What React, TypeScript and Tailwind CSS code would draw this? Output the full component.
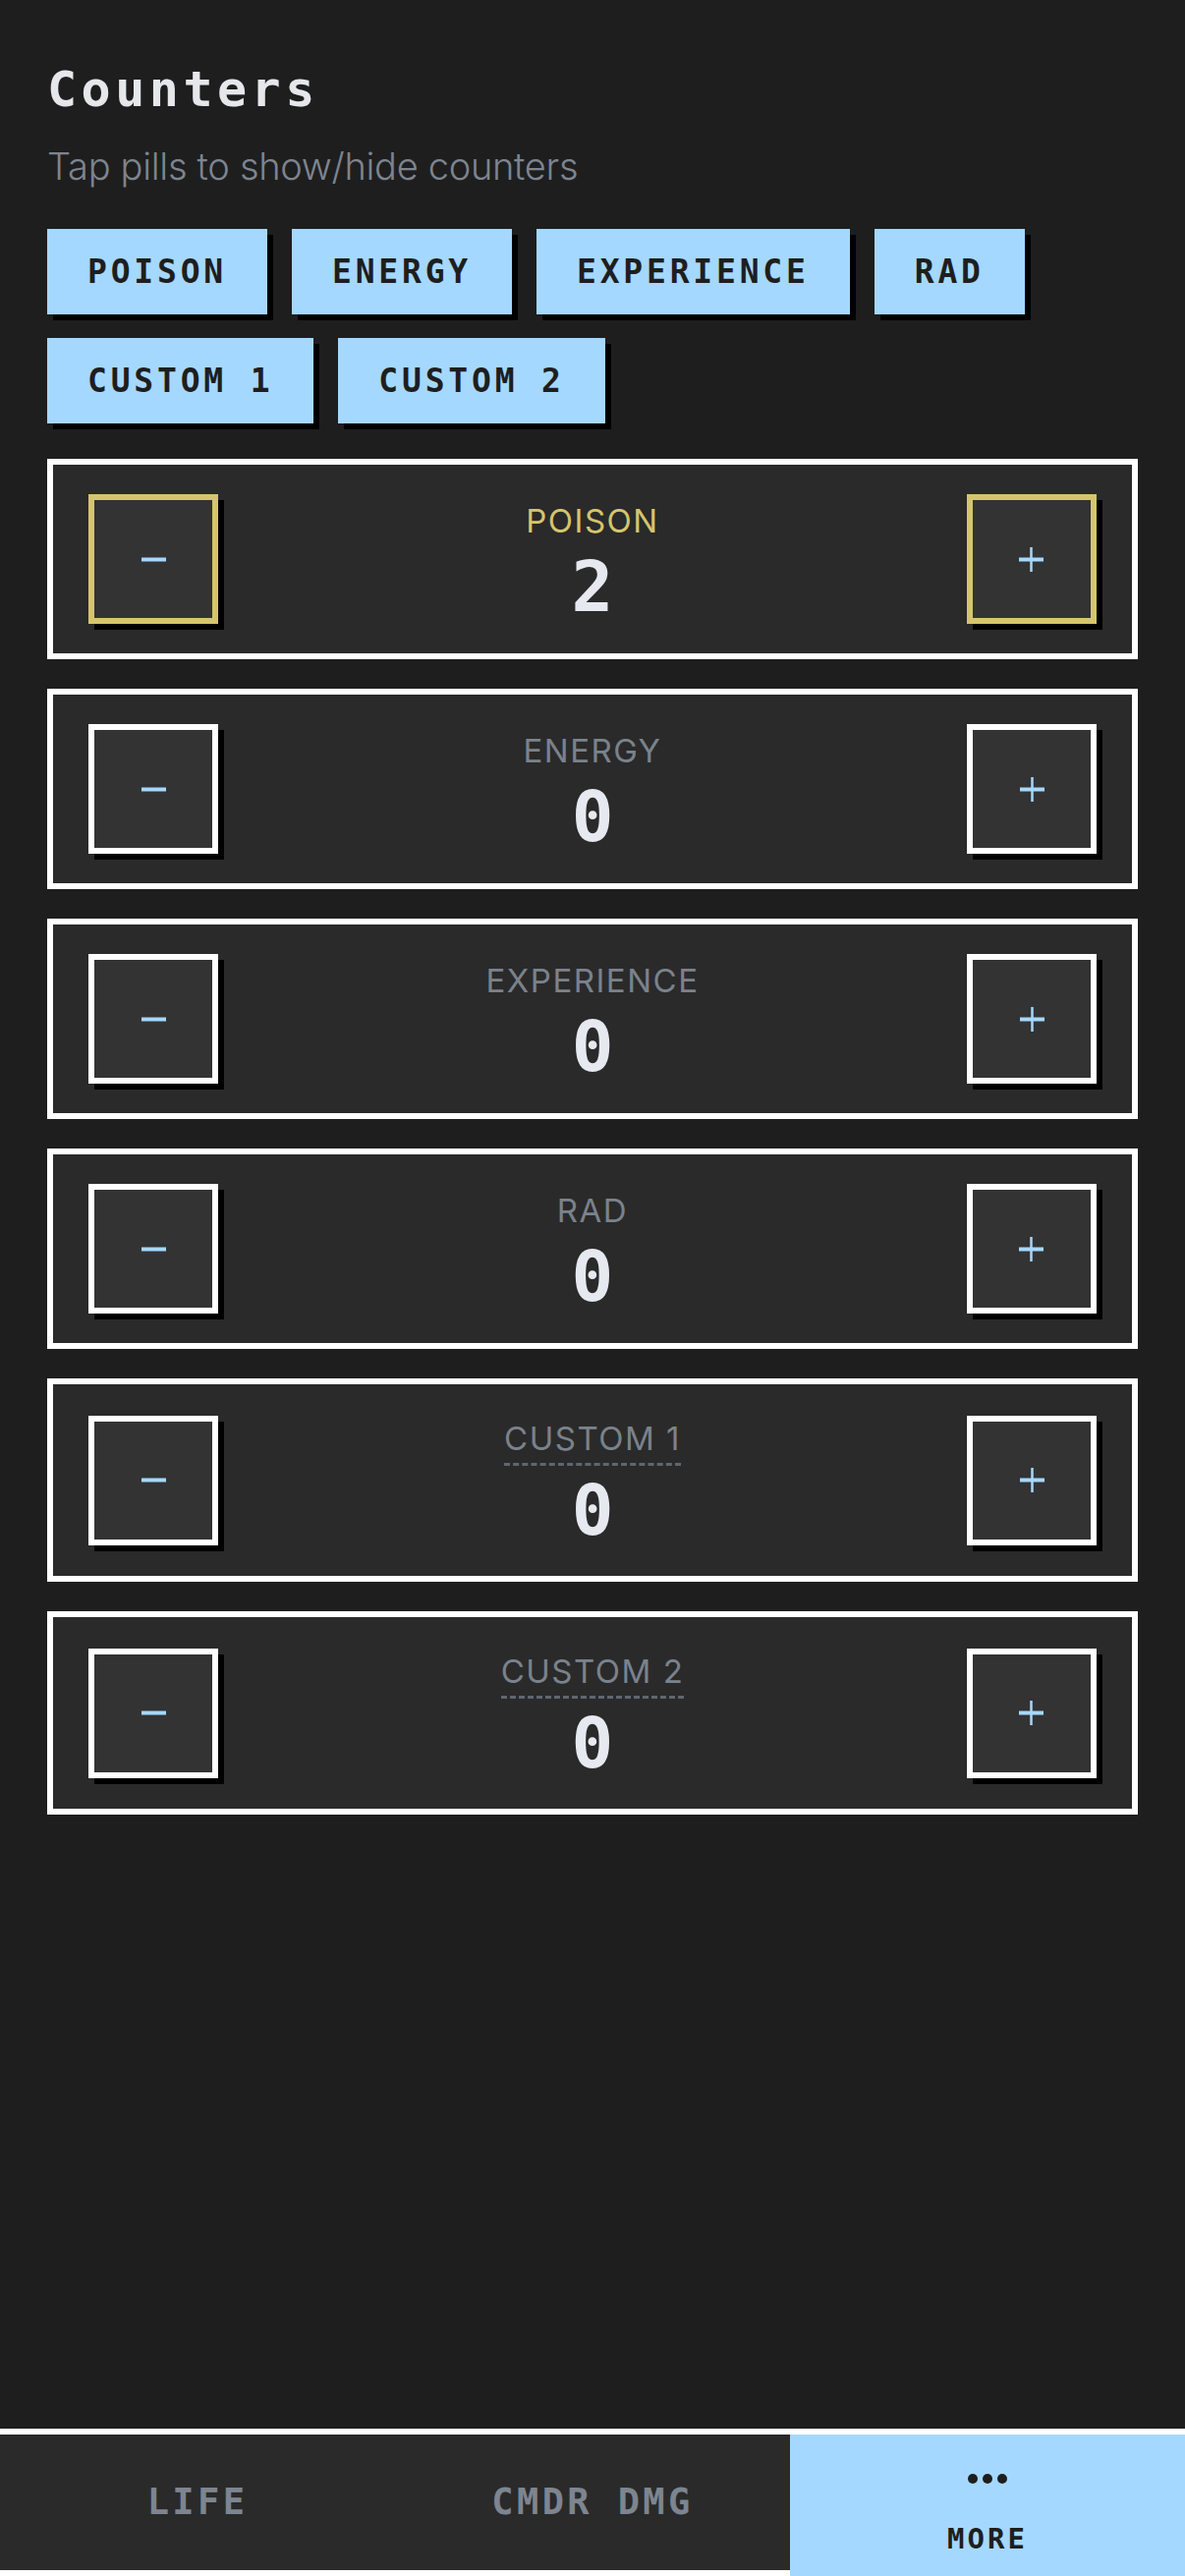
import { useState } from "react";

interface Counter {
  name: string;
  value: number;
  custom?: boolean;
}

const INITIAL: Counter[] = [
  { name: "POISON", value: 2 },
  { name: "ENERGY", value: 0 },
  { name: "EXPERIENCE", value: 0 },
  { name: "RAD", value: 0 },
  { name: "CUSTOM 1", value: 0, custom: true },
  { name: "CUSTOM 2", value: 0, custom: true },
];

const TABS = ["LIFE", "CMDR DMG", "MORE"] as const;

function MinusIcon() {
  return (
    <svg width="25" height="25" viewBox="0 0 25 25">
      <rect x="0" y="10.5" width="25" height="4" fill="#a5d8ff" />
    </svg>
  );
}

function PlusIcon() {
  return (
    <svg width="25" height="25" viewBox="0 0 25 25">
      <rect x="0" y="10.5" width="25" height="4" fill="#a5d8ff" />
      <rect x="11.25" y="0" width="2.5" height="25" fill="#a5d8ff" />
    </svg>
  );
}

function StepButton({ highlight, onClick, children }: { highlight: boolean; onClick: () => void; children: React.ReactNode }) {
  return (
    <button
      onClick={onClick}
      className={`w-[132px] h-[132px] shrink-0 flex items-center justify-center bg-[#333333] border-[6px] shadow-[6px_6px_0_#000] ${
        highlight ? "border-[#d5c56d]" : "border-white"
      }`}
    >
      {children}
    </button>
  );
}

export default function App() {
  const [counters, setCounters] = useState<Counter[]>(INITIAL);
  const [activeTab, setActiveTab] = useState<string>("MORE");

  const bump = (i: number, d: number) =>
    setCounters((prev) => prev.map((c, j) => (j === i ? { ...c, value: c.value + d } : c)));

  return (
    <div className="min-h-screen flex flex-col bg-[#1e1e1e]">
      <div className="px-[48px] pt-[61px]">
        <h1 className="font-['DejaVu_Sans_Mono',monospace] font-bold text-[50px] leading-[60px] tracking-[4.5px] text-[#e5e7eb]">
          Counters
        </h1>
        <p className="mt-[23px] font-['Inter',sans-serif] font-light text-[38px] leading-[50px] tracking-[-0.3px] text-[#7d8590]">
          Tap pills to show/hide counters
        </p>

        <div className="mt-[39px] flex flex-wrap gap-x-[25px] gap-y-[24px] w-[1000px]">
          {counters.map((c) => (
            <button
              key={c.name}
              className="h-[87px] px-[41px] flex items-center bg-[#a5d8ff] shadow-[6px_6px_0_#000] font-['DejaVu_Sans_Mono',monospace] font-bold text-[33px] tracking-[3.8px] text-[#1e1e1e]"
            >
              {c.name}
            </button>
          ))}
        </div>

        <div className="mt-[36px] flex flex-col gap-[30px]">
          {counters.map((c, i) => {
            const hot = c.value > 0;
            return (
              <div
                key={c.name}
                className="border-[6px] border-white bg-[#2a2a2a] px-[36px] py-[30px] flex items-center justify-between"
              >
                <StepButton highlight={hot} onClick={() => bump(i, -1)}>
                  <MinusIcon />
                </StepButton>
                <div className="flex flex-col items-center">
                  <span
                    className={`font-['Inter',sans-serif] text-[33px] leading-[50px] tracking-[1.5px] ${
                      hot ? "text-[#d5c56d]" : "text-[#7a828c]"
                    } ${c.custom ? "border-b-[3px] border-dashed border-[#5f6670] mb-[3px]" : ""}`}
                  >
                    {c.name}
                  </span>
                  <span className="mt-[7px] font-['DejaVu_Sans_Mono',monospace] font-bold text-[71px] leading-[72px] text-[#e6e9ef]">
                    {c.value}
                  </span>
                </div>
                <StepButton highlight={hot} onClick={() => bump(i, 1)}>
                  <PlusIcon />
                </StepButton>
              </div>
            );
          })}
        </div>
      </div>

      <nav className="mt-auto border-t-[6px] border-white bg-white flex items-start">
        {TABS.map((tab) =>
          tab === activeTab ? (
            <button
              key={tab}
              onClick={() => setActiveTab(tab)}
              className="flex-1 h-[144px] bg-[#a5d8ff] flex flex-col items-center pt-[40px]"
            >
              <svg width="40" height="10" viewBox="0 0 40 10">
                <circle cx="5" cy="5" r="5" fill="#1e1e1e" />
                <circle cx="20" cy="5" r="5" fill="#1e1e1e" />
                <circle cx="35" cy="5" r="5" fill="#1e1e1e" />
              </svg>
              <span className="mt-[38px] font-['DejaVu_Sans_Mono',monospace] font-bold text-[29px] leading-[36px] tracking-[3px] text-[#1e1e1e]">
                {tab}
              </span>
            </button>
          ) : (
            <button
              key={tab}
              onClick={() => setActiveTab(tab)}
              className="flex-1 h-[138px] bg-[#2a2a2a] flex items-center justify-center font-['DejaVu_Sans_Mono',monospace] font-bold text-[37px] tracking-[3.4px] text-[#7d8590]"
            >
              {tab}
            </button>
          )
        )}
      </nav>
    </div>
  );
}
